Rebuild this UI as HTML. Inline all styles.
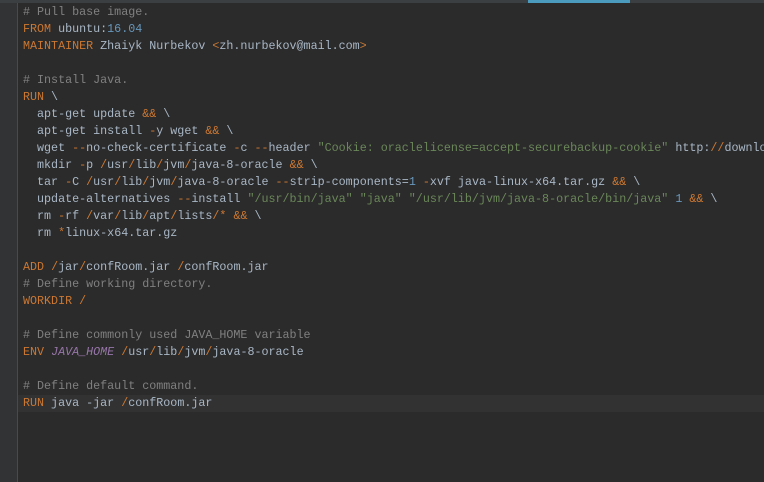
<!DOCTYPE html><html><head><style>
body{margin:0;width:764px;height:482px;background:#2b2b2b;overflow:hidden;position:relative;font-family:"Liberation Mono","Courier New",monospace;font-size:11.7px;color:#a9b7c6}
.top{position:absolute;left:0;top:0;width:764px;height:3px;background:#3c3f41}
.tab{position:absolute;left:528px;top:0;width:102px;height:3px;background:#4a9bbd}
.gut{position:absolute;left:0;top:3px;width:17px;height:479px;background:#313335;border-right:1px solid #4a4a4a}
.cur{position:absolute;left:18px;top:395px;width:746px;height:17px;background:#323232}
.wrap{position:absolute;left:23px;top:4px;width:741px;height:478px;overflow:hidden}
pre{margin:0;font-family:"Liberation Mono","Courier New",monospace;font-size:11.7px;line-height:17px;white-space:pre}
.c{color:#808080}.k{color:#cc7832}.s{color:#6a8759}.n{color:#6897bb}.v{color:#9876aa;font-style:italic}
</style></head><body>
<div class="top"></div><div class="tab"></div><div class="gut"></div><div class="cur"></div>
<div class="wrap"><pre><span class="c"># Pull base image.</span>
<span class="k">FROM</span> ubuntu:<span class="n">16.04</span>
<span class="k">MAINTAINER</span> Zhaiyk Nurbekov <span class="k">&lt;</span>zh.nurbekov@mail.com<span class="k">&gt;</span>

<span class="c"># Install Java.</span>
<span class="k">RUN</span> \
  apt-get update <span class="k">&amp;&amp;</span> \
  apt-get install <span class="k">-</span>y wget <span class="k">&amp;&amp;</span> \
  wget <span class="k">--</span>no-check-certificate <span class="k">-</span>c <span class="k">--</span>header <span class="s">"Cookie: oraclelicense=accept-securebackup-cookie"</span> http:<span class="k">//</span>downlo
  mkdir <span class="k">-</span>p <span class="k">/</span>usr<span class="k">/</span>lib<span class="k">/</span>jvm<span class="k">/</span>java-8-oracle <span class="k">&amp;&amp;</span> \
  tar <span class="k">-</span>C <span class="k">/</span>usr<span class="k">/</span>lib<span class="k">/</span>jvm<span class="k">/</span>java-8-oracle <span class="k">--</span>strip-components=<span class="n">1</span> <span class="k">-</span>xvf java-linux-x64.tar.gz <span class="k">&amp;&amp;</span> \
  update-alternatives <span class="k">--</span>install <span class="s">"/usr/bin/java"</span> <span class="s">"java"</span> <span class="s">"/usr/lib/jvm/java-8-oracle/bin/java"</span> <span class="n">1</span> <span class="k">&amp;&amp;</span> \
  rm <span class="k">-</span>rf <span class="k">/</span>var<span class="k">/</span>lib<span class="k">/</span>apt<span class="k">/</span>lists<span class="k">/*</span> <span class="k">&amp;&amp;</span> \
  rm <span class="k">*</span>linux-x64.tar.gz

<span class="k">ADD</span> <span class="k">/</span>jar<span class="k">/</span>confRoom.jar <span class="k">/</span>confRoom.jar
<span class="c"># Define working directory.</span>
<span class="k">WORKDIR</span> <span class="k">/</span>

<span class="c"># Define commonly used JAVA_HOME variable</span>
<span class="k">ENV</span> <span class="v">JAVA_HOME</span> <span class="k">/</span>usr<span class="k">/</span>lib<span class="k">/</span>jvm<span class="k">/</span>java-8-oracle

<span class="c"># Define default command.</span>
<span class="k">RUN</span> java -jar <span class="k">/</span>confRoom.jar</pre></div>
</body></html>
